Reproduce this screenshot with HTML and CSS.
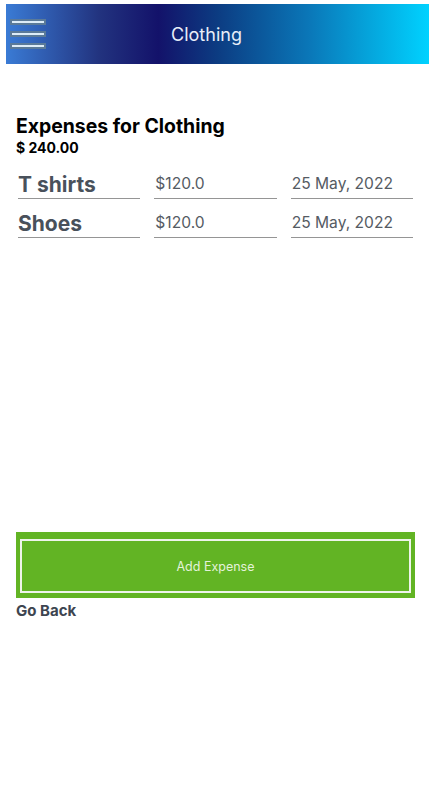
FILE: index.html
```html
<!DOCTYPE html>
<html>
<head>
<meta charset="utf-8">
<link rel="stylesheet" href="styles.css">
</head>
<body>
<header class="topbar">
  <div class="menu">
    <span class="bar"></span>
    <span class="bar"></span>
    <span class="bar"></span>
  </div>
  <div class="title">Clothing</div>
</header>
<main class="content">
  <h1 class="heading">Expenses for Clothing</h1>
  <div class="total">$ 240.00</div>
  <div class="rows">
    <div class="field name">T shirts</div>
    <div class="field amount">$120.0</div>
    <div class="field date">25 May, 2022</div>
    <div class="field name">Shoes</div>
    <div class="field amount">$120.0</div>
    <div class="field date">25 May, 2022</div>
  </div>
  <div class="spacer"></div>
  <button class="add"><span class="add-inner">Add Expense</span></button>
  <div class="back">Go Back</div>
</main>
</body>
</html>
```
FILE: styles.css
```css
* { box-sizing: border-box; }
body {
  margin: 0;
  font-family: Inter, "Open Sans", sans-serif;
  background: #fff;
}
.topbar {
  margin: 4px 2px 0 6px;
  height: 60px;
  display: flex;
  align-items: center;
  position: relative;
  background: linear-gradient(to right, #3a7bd5 0%, #22337f 22%, #13126a 36%, #0c3c82 50%, #0a78b9 72%, #00d2ff 100%);
}
.menu {
  display: flex;
  flex-direction: column;
  gap: 6px;
  margin-left: 4px;
}
.bar {
  display: block;
  width: 36px;
  height: 6px;
  background: #dcecf8;
  border: 2px solid #5b7a98;
}
.title {
  position: absolute;
  left: 0;
  right: 22px;
  text-align: center;
  color: #e8eef8;
  font-size: 18px;
  pointer-events: none;
}
.content {
  padding: 51px 16px 0 16px;
}
.heading {
  margin: 0;
  font-size: 19.4px;
  font-weight: 700;
  color: #000;
  line-height: 22px;
}
.total {
  margin-top: 2px;
  font-size: 14px;
  font-weight: 700;
  color: #000;
  line-height: 18px;
}
.rows {
  margin: 15px 2px 0 2px;
  display: grid;
  grid-template-columns: repeat(3, 1fr);
  column-gap: 14px;
  row-gap: 12px;
}
.field {
  border-bottom: 1px solid #959595;
  height: 27px;
  display: flex;
  align-items: flex-end;
  padding-bottom: 3px;
  color: #555b63;
}
.field.name {
  font-size: 21px;
  font-weight: 700;
  color: #49515b;
  padding-bottom: 1px;
}
.field.amount, .field.date {
  font-size: 15.6px;
  padding-left: 1px;
  align-items: flex-start;
  padding-top: 2px;
}
.spacer { height: 294px; }
.add {
  display: block;
  width: 399px;
  height: 66px;
  background: #62b424;
  border: none;
  padding: 7px 4px 5px 4px;
  font-family: inherit;
}
.add-inner {
  display: flex;
  align-items: center;
  justify-content: center;
  height: 100%;
  border: 2px solid #eef4ea;
  color: #e4f2da;
  font-size: 12.5px;
}
.back {
  margin-top: 3px;
  font-size: 15px;
  font-weight: 700;
  color: #3d4550;
}
```
